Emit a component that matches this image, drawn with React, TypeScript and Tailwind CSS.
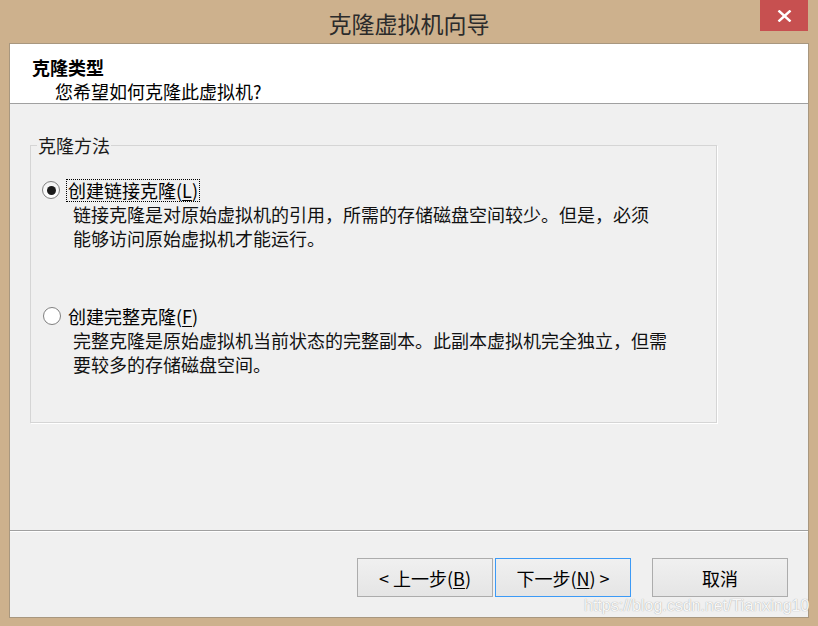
export default function App() {
  const font = { fontFamily: '"Noto Sans CJK SC", "Microsoft YaHei", sans-serif' };
  return (
    <div className="relative w-[818px] h-[626px] bg-[#cdb18d] flex flex-col overflow-hidden text-black" style={font}>
      {/* title bar */}
      <div className="h-[43px] shrink-0 grid grid-cols-[58px_1fr_58px]">
        <div />
        <div className="flex items-center justify-center pt-[3px] text-[23px] text-[#2b2b2b] leading-none">克隆虚拟机向导</div>
        <div className="flex items-start">
          <div className="w-[48px] h-[31px] bg-[#c75050] flex items-center justify-center">
            <svg width="15" height="12" viewBox="0 0 15 12">
              <path d="M1.5 0.5 L13.5 11.5 M13.5 0.5 L1.5 11.5" stroke="#ffffff" strokeWidth="2.4" fill="none" />
            </svg>
          </div>
        </div>
      </div>

      {/* client area */}
      <div className="mx-[9px] h-[575px] shrink-0 border border-[#a8977f] bg-[#f0f0f0] flex flex-col">
        {/* header */}
        <div className="h-[60px] shrink-0 bg-white border-b border-[#a0a0a0] pt-[12px]">
          <div className="pl-[22px] text-[18px] font-bold leading-[22px]">克隆类型</div>
          <div className="pl-[45px] mt-[2px] text-[18px] leading-[22px]">您希望如何克隆此虚拟机?</div>
        </div>

        {/* body */}
        <div className="flex-1 pt-[29px] pl-[20px]">
          <fieldset className="w-[687px] border border-[#d5d5d5] shadow-[1px_1px_0_#ffffff] pl-[6px] pt-[21px] pb-[46px]">
            <legend className="px-[1px] text-[18px] leading-[24px] text-[#1a1a1a]">克隆方法</legend>

            <div className="ml-[5px]">
              <div className="flex items-center h-[24px]">
                <div className="w-[18px] h-[18px] rounded-full border border-[#808080] bg-gradient-to-b from-[#f2f2f2] to-[#ffffff] flex items-center justify-center mr-[6px]">
                  <div className="w-[9px] h-[9px] rounded-full bg-[#1a1a1a]" />
                </div>
                <div className="border border-dotted border-black px-[1px] h-[23px] flex items-center text-[18px] leading-[22px] whitespace-nowrap">
                  创建链接克隆(<span className="underline underline-offset-[2px]">L</span>)
                </div>
              </div>
              <div className="ml-[31px] text-[18px] leading-[24px] whitespace-nowrap text-[#111]">
                <div>链接克隆是对原始虚拟机的引用，所需的存储磁盘空间较少。但是，必须</div>
                <div>能够访问原始虚拟机才能运行。</div>
              </div>
            </div>

            <div className="ml-[5px] mt-[54px]">
              <div className="flex items-center h-[24px]">
                <div className="w-[18px] h-[18px] rounded-full border border-[#808080] bg-white mr-[6px] ml-[1px]" />
                <div className="px-[1px] text-[18px] leading-[22px] whitespace-nowrap">
                  创建完整克隆(<span className="underline underline-offset-[2px]">F</span>)
                </div>
              </div>
              <div className="ml-[31px] text-[18px] leading-[24px] whitespace-nowrap text-[#111]">
                <div>完整克隆是原始虚拟机当前状态的完整副本。此副本虚拟机完全独立，但需</div>
                <div>要较多的存储磁盘空间。</div>
              </div>
            </div>
          </fieldset>
        </div>

        {/* footer */}
        <div className="h-[87px] shrink-0 border-t border-[#a0a0a0]">
          <div className="border-t border-white h-full pt-[26px] pr-[20px] flex justify-end items-start">
            <button className="w-[136px] h-[39px] border border-[#acacac] bg-gradient-to-b from-[#f0f0f0] to-[#e5e5e5] text-[18px] leading-none flex items-center justify-center">
              &lt; 上一步(<span className="underline underline-offset-[2px]">B</span>)
            </button>
            <button className="ml-[2px] w-[136px] h-[39px] border border-[#3c9af6] bg-gradient-to-b from-[#f0f0f0] to-[#e5e5e5] text-[18px] leading-none flex items-center justify-center">
              下一步(<span className="underline underline-offset-[2px]">N</span>) &gt;
            </button>
            <button className="ml-[21px] w-[136px] h-[39px] border border-[#acacac] bg-gradient-to-b from-[#f0f0f0] to-[#e5e5e5] text-[18px] leading-none flex items-center justify-center">
              取消
            </button>
          </div>
        </div>
      </div>

      {/* watermark */}
      <div
        className="absolute left-[584px] top-[597px] text-[16px] leading-[18px] text-[#f8f8f8] whitespace-nowrap [text-shadow:0_0_1px_#909090]"
        style={{ fontFamily: '"Liberation Sans", Arial, sans-serif' }}
      >
        https://blog.csdn.net/Tianxing10
      </div>
    </div>
  );
}
